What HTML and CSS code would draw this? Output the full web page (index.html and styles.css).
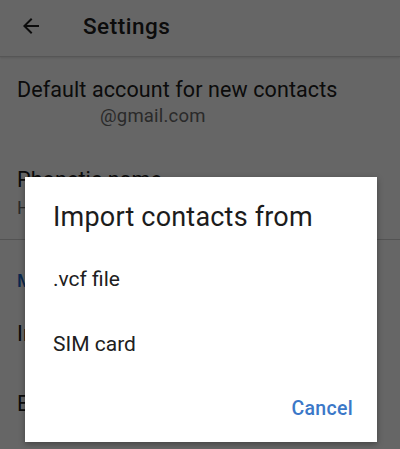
FILE: index.html
```html
<!DOCTYPE html>
<html>
<head>
<meta charset="utf-8">
<link rel="stylesheet" href="styles.css">
</head>
<body>
<div class="screen">
  <header class="appbar">
    <svg class="back" viewBox="0 0 24 24" width="24" height="24"><path d="M20 11H7.83l5.59-5.59L12 4l-8 8 8 8 1.41-1.41L7.83 13H20v-2z" fill="currentColor"/></svg>
    <h1 class="title">Settings</h1>
  </header>
  <div class="item first">
    <div class="primary">Default account for new contacts</div>
    <div class="secondary indent">@gmail.com</div>
  </div>
  <div class="item second">
    <div class="primary">Phonetic name</div>
    <div class="secondary">Hide if empty</div>
  </div>
  <div class="section">Manage contacts</div>
  <div class="item single">
    <div class="primary">Import</div>
  </div>
  <div class="item single last">
    <div class="primary">Export</div>
  </div>
  <div class="scrim"></div>
  <div class="dialog">
    <h2 class="dtitle">Import contacts from</h2>
    <div class="options">
      <div class="option">.vcf file</div>
      <div class="option">SIM card</div>
    </div>
    <div class="actions"><span class="btn">Cancel</span></div>
  </div>
</div>
</body>
</html>
```
FILE: styles.css
```css
html, body { margin: 0; padding: 0; }
body {
  width: 400px; height: 449px; overflow: hidden;
  font-family: Roboto, "Noto Sans", sans-serif;
  background: #fff;
}
.screen { position: relative; width: 400px; height: 449px; overflow: hidden; color: #202020; }
.appbar {
  height: 56px; display: flex; align-items: center;
  border-bottom: 1px solid #d8d8d8;
  box-shadow: 0 1px 2px rgba(0,0,0,0.12);
}
.back { margin-left: 19px; margin-top: -4px; width: 24px; height: 24px; color: #202020; }
.title { margin: -4px 0 0 40px; font-size: 22.5px; font-weight: 500; letter-spacing: 0.5px; }
.item { padding-left: 17px; }
.first { padding-top: 19px; height: 95px; box-sizing: border-box; }
.primary { font-size: 21.5px; line-height: 28px; letter-spacing: 0.1px; }
.secondary { font-size: 18.5px; line-height: 24px; color: #6a6a6a; letter-spacing: 0.2px; }
.indent { padding-left: 83px; }
.second { padding-top: 14px; height: 88px; box-sizing: border-box; border-bottom: 1px solid #d0d0d0; }
.second .secondary { margin-top: 2px; }
.section { padding-left: 17px; color: #1a62c4; font-size: 18px; font-weight: 500; height: 64px; display: flex; align-items: center; padding-top: 16px; box-sizing: border-box; }
.single { height: 60px; display: flex; align-items: center; }
.last { height: 80px; }
.scrim { position: absolute; inset: 0; background: rgba(0,0,0,0.6); }
.dialog {
  position: absolute; left: 25px; top: 177px; width: 352px; height: 265px;
  background: #fff; box-sizing: border-box; padding: 20px 0 0 28px;
  box-shadow: 0 2px 6px rgba(0,0,0,0.35);
  display: flex; flex-direction: column;
}
.dtitle { margin: 0; font-size: 27px; font-weight: 400; line-height: 40px; color: #1c1c1c; letter-spacing: 0.2px; }
.options { margin-top: 10px; display: flex; flex-direction: column; }
.option { font-size: 21px; line-height: 65px; color: #202020; }
.actions { margin-top: auto; display: flex; justify-content: flex-end; padding: 0 24px 21px 0; }
.btn { color: #3b78c8; font-size: 19.5px; font-weight: 500; letter-spacing: 0.3px; line-height: 24px; }
```
